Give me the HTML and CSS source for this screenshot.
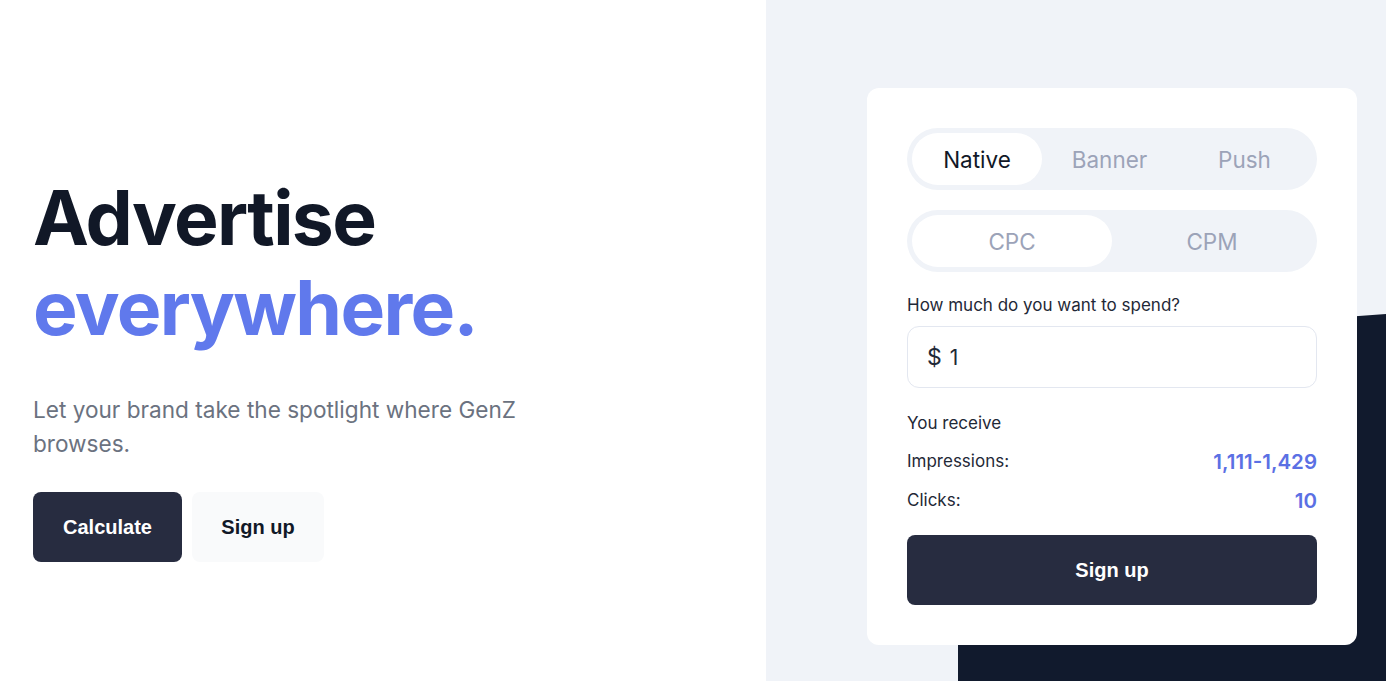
FILE: index.html
```html
<!DOCTYPE html>
<html lang="en">
<head>
<meta charset="utf-8">
<title>Advertise everywhere</title>
<link rel="stylesheet" href="styles.css">
</head>
<body>
<main class="page">
  <section class="hero">
    <h1 class="title"><span class="title-dark">Advertise</span><span class="title-blue">everywhere.</span></h1>
    <p class="lead">Let your brand take the spotlight where GenZ browses.</p>
    <div class="actions">
      <button class="btn btn-dark">Calculate</button>
      <button class="btn btn-light">Sign up</button>
    </div>
  </section>
  <section class="side">
    <svg class="blob" viewBox="0 0 620 681" preserveAspectRatio="none" aria-hidden="true">
      <path d="M192,681 L192,368 Q192,346 214,344 L620,314 L620,681 Z" fill="#111a2d"/>
    </svg>
    <div class="card">
      <div class="seg seg-3">
        <span class="seg-item active">Native</span>
        <span class="seg-item">Banner</span>
        <span class="seg-item">Push</span>
      </div>
      <div class="seg seg-2">
        <span class="seg-item active muted">CPC</span>
        <span class="seg-item">CPM</span>
      </div>
      <label class="label">How much do you want to spend?</label>
      <div class="input"><span class="cur">$</span><span class="val">1</span></div>
      <div class="receive">You receive</div>
      <div class="row"><span>Impressions:</span><span class="num">1,111-1,429</span></div>
      <div class="row"><span>Clicks:</span><span class="num">10</span></div>
      <button class="btn btn-dark btn-block">Sign up</button>
    </div>
  </section>
</main>
</body>
</html>
```

FILE: styles.css
```css
* { box-sizing: border-box; }
html, body { margin: 0; height: 100%; }
body {
  font-family: Inter, "Noto Sans", sans-serif;
  background: #ffffff;
  color: #111827;
  overflow: hidden;
}
.page {
  display: flex;
  width: 1386px;
  height: 681px;
}
.hero {
  width: 766px;
  flex: none;
  padding: 173px 0 0 33px;
}
.title {
  margin: 0;
  font-size: 75px;
  line-height: 90px;
  font-weight: 700;
  letter-spacing: -0.022em;
}
.title span { display: block; }
.title-dark { color: #111827; }
.title-blue { color: #6079ec; }
.lead {
  margin: 40px 0 0;
  width: 520px;
  font-size: 22.6px;
  line-height: 34px;
  color: #6b7280;
}
.actions {
  display: flex;
  gap: 10px;
  margin-top: 31px;
}
.btn {
  border: 0;
  border-radius: 8px;
  height: 70px;
  font-family: "Liberation Sans", Arial, sans-serif;
  font-weight: 700;
  font-size: 20px;
  cursor: pointer;
}
.btn-dark { background: #272c40; color: #ffffff; width: 149px; }
.btn-light { background: #f9fafb; color: #111827; width: 132px; }
.side {
  flex: 1;
  position: relative;
  background: #f0f3f8;
  padding: 88px 0 0 101px;
}
.blob {
  position: absolute;
  left: 0;
  top: 0;
  width: 620px;
  height: 681px;
}
.card {
  position: relative;
  width: 490px;
  background: #ffffff;
  border-radius: 12px;
  padding: 40px 40px 40px;
  display: flex;
  flex-direction: column;
}
.seg {
  display: grid;
  background: #f0f3f8;
  border-radius: 999px;
  padding: 5px;
  height: 62px;
}
.seg-3 { grid-template-columns: 130px 1fr 1fr; }
.seg-2 { grid-template-columns: 1fr 1fr; margin-top: 20px; }
.seg-item {
  display: flex;
  align-items: center;
  justify-content: center;
  border-radius: 999px;
  font-size: 22.5px;
  color: #9ca3b8;
}
.seg-item.active { background: #ffffff; color: #111827; }
.seg-item.active.muted { color: #9ca3b8; }
.label {
  margin-top: 21px;
  font-size: 17px;
  line-height: 24px;
  color: #1f2937;
}
.input {
  margin-top: 9px;
  height: 62px;
  border: 1px solid #e3e7f0;
  border-radius: 12px;
  display: flex;
  align-items: center;
  gap: 8px;
  padding-left: 19px;
  font-size: 21px;
  color: #1f2937;
}
.cur { font-size: 23px; }
.receive {
  margin-top: 23px;
  font-size: 17px;
  line-height: 24px;
  color: #1f2937;
}
.row {
  display: flex;
  justify-content: space-between;
  align-items: center;
  margin-top: 14px;
  font-size: 17px;
  line-height: 25px;
  color: #1f2937;
}
.num {
  color: #5b70e4;
  font-weight: 600;
  font-size: 20.5px;
}
.btn-block {
  width: 100%;
  margin-top: 22px;
  font-size: 20px;
}
```
